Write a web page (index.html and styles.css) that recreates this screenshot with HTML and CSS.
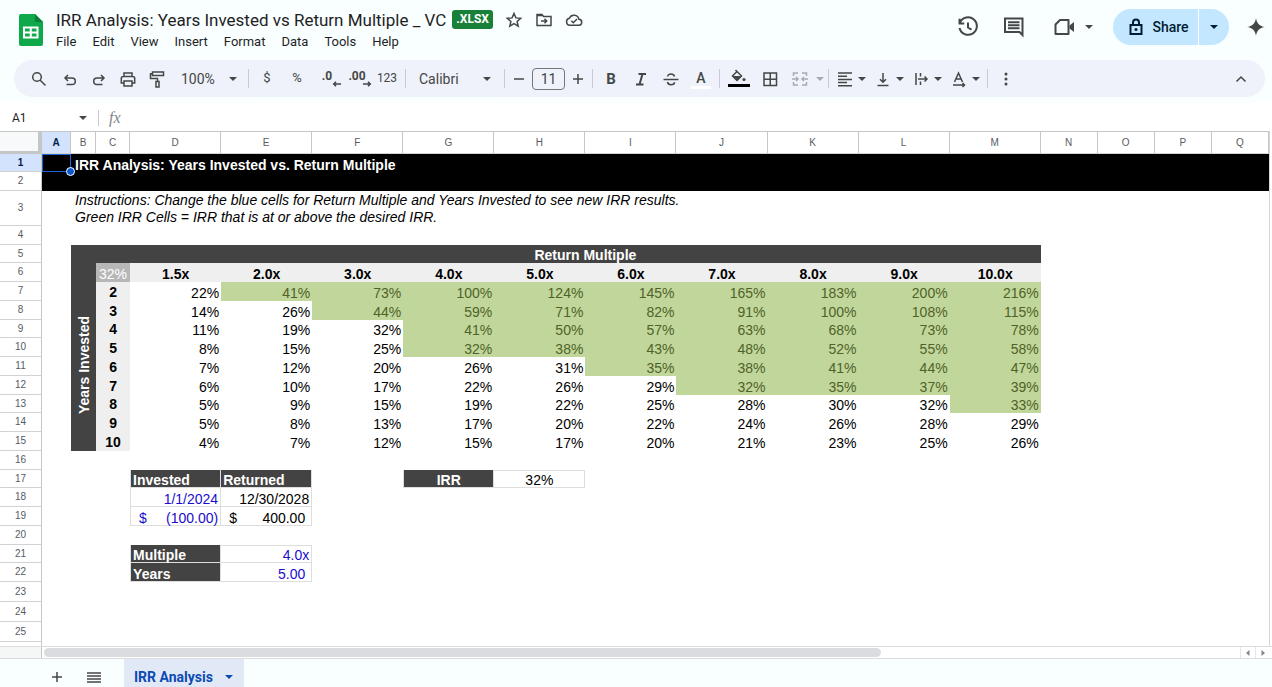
FILE: index.html
```html
<!DOCTYPE html>
<html lang="en">
  <head>
    <meta charset="utf-8">
    <meta name="viewport" content="width=device-width, initial-scale=1">
    <title>IRR Analysis: Years Invested vs Return Multiple _ VC</title>
    <link rel="stylesheet" href="styles.css">
  </head>
  <body>
    <svg class="defs" aria-hidden="true">
      <symbol id="caret" viewBox="0 0 10 10"><path d="M1 3h8L5 7z"/></symbol>
    </svg>

    <header class="header">
      <svg class="logo" viewBox="0 0 24 32" aria-hidden="true">
        <path fill="#0fa84b" d="M2 0h14l8 8v22a2 2 0 0 1-2 2H2a2 2 0 0 1-2-2V2a2 2 0 0 1 2-2z"/>
        <path fill="#0b7f37" d="M16 0l8 8h-8z"/>
        <path fill="#fff" fill-rule="evenodd" d="M4 12.500h15.500v12H4zM6 14.500v3h4.700v-3zM12.800 14.500v3h4.700v-3zM6 19.500v3h4.700v-3zM12.800 19.500v3h4.700v-3z"/>
      </svg>
      <div class="doc">
        <div class="title_row">
          <h1>IRR Analysis: Years Invested vs Return Multiple _ VC</h1>
          <span class="badge">.XLSX</span>
          <button class="small_icon" aria-label="Star">
            <svg class="line" viewBox="0 0 18 18"><path d="M9 2.500l1.900 4.400 4.800.4-3.600 3.200 1.100 4.700L9 12.700l-4.200 2.500 1.100-4.700-3.600-3.200 4.800-.4z"/></svg>
          </button>
          <button class="small_icon" aria-label="Move">
            <svg class="line" viewBox="0 0 18 18"><path d="M2 14.500v-11h5l1.500 2H16v9zM6 10h5.500M9.500 7.800l2.200 2.200-2.200 2.200M2 4.500h5"/></svg>
          </button>
          <button class="small_icon" aria-label="Saved to Drive">
            <svg class="line" viewBox="0 0 18 18"><path d="M4.800 14.300h8.700a3 3 0 0 0 .4-6 5 5 0 0 0-9.500-1.100 3.600 3.600 0 0 0 .4 7.100zM6.300 9.700l2 2 3.700-3.700"/></svg>
          </button>
        </div>
        <nav class="menu">
          <button>File</button>
          <button>Edit</button>
          <button>View</button>
          <button>Insert</button>
          <button>Format</button>
          <button>Data</button>
          <button>Tools</button>
          <button>Help</button>
        </nav>
      </div>
      <div class="actions">
        <button class="action" aria-label="Version history">
          <svg class="line bold" viewBox="0 0 22 22"><path d="M3 6.500A8.800 8.800 0 1 1 2.500 12M2.500 2.800v4.700h4.700M11 6.500v5l3.500 2.200"/></svg>
        </button>
        <button class="action" aria-label="Comments">
          <svg class="line bold" viewBox="0 0 22 22"><path d="M2 2.500h17.500v16.500l-3-3H2zM5 6.200h11.500M5 9.200h11.500M5 12.200h11.500"/></svg>
        </button>
        <button class="action meet" aria-label="Join a call">
          <svg class="line bold" viewBox="0 0 22 22"><path stroke-linejoin="round" d="M7 4h8.500v14H2.500V8.500z"/><path class="solid" d="M16.500 9.500L21 6v10l-4.500-3.500z"/></svg>
          <svg class="caret"><use href="#caret"/></svg>
        </button>
        <div class="share">
          <button class="share_main">
            <svg class="line bold" viewBox="0 0 16 18"><path d="M2.500 7h11v9h-11zM5 7V4.500a3 3 0 0 1 6 0V7"/><circle class="dot" cx="8" cy="11.500" r="1.500"/></svg>
            Share
          </button>
          <button class="share_more" aria-label="Share options"><svg class="caret"><use href="#caret"/></svg></button>
        </div>
        <button class="spark" aria-label="Ask Gemini">
          <svg viewBox="0 0 20 20"><path d="M10 0c.8 6 4 9.200 10 10-6 .8-9.200 4-10 10-.8-6-4-9.200-10-10 6-.8 9.200-4 10-10z"/></svg>
        </button>
      </div>
    </header>

    <div class="toolbar" role="toolbar">
      <button class="tool search" aria-label="Search the menus">
        <svg class="line" viewBox="0 0 18 18"><circle cx="7" cy="7" r="4.300"/><path d="M10.200 10.200l5.300 5.300"/></svg>
      </button>
      <button class="tool" aria-label="Undo">
        <svg class="line" viewBox="0 0 18 18"><path d="M7 5L4 8l3 3M4 8h7a3.300 3.300 0 0 1 0 6.600H5.500"/></svg>
      </button>
      <button class="tool" aria-label="Redo">
        <svg class="line" viewBox="0 0 18 18"><path d="M11 5l3 3-3 3M14 8H7a3.300 3.300 0 0 0 0 6.600h5.500"/></svg>
      </button>
      <button class="tool" aria-label="Print">
        <svg class="line" viewBox="0 0 18 18"><path d="M5 6V3h8v3M5 13H2.300V8.500A2 2 0 0 1 4.300 6.500h9.400a2 2 0 0 1 2 2V13H13M5 11h8v5H5z"/></svg>
      </button>
      <button class="tool" aria-label="Paint format">
        <svg class="line" viewBox="0 0 18 18"><path d="M4.500 2h11v3.500h-11zM4.500 3.700H2.500v4.800h7v3M8 11.500h3V17H8z"/></svg>
      </button>
      <label class="picker zoom">
        <select aria-label="Zoom"><option>100%</option></select>
        <svg class="caret"><use href="#caret"/></svg>
      </label>
      <span class="sep"></span>
      <button class="tool wide sign" aria-label="Format as currency">$</button>
      <button class="tool wide sign" aria-label="Format as percent">%</button>
      <button class="tool wide decimal" aria-label="Decrease decimal places">.0<svg class="line" viewBox="0 0 10 6"><path d="M9 3H2M4 .7L1.700 3 4 5.300"/></svg></button>
      <button class="tool wide decimal" aria-label="Increase decimal places">.00<svg class="line" viewBox="0 0 10 6"><path d="M1 3h7M6 .7L8.300 3 6 5.300"/></svg></button>
      <button class="tool wide number" aria-label="More formats">123</button>
      <span class="sep"></span>
      <label class="picker font">
        <select aria-label="Font"><option>Calibri</option></select>
        <svg class="caret"><use href="#caret"/></svg>
      </label>
      <span class="sep"></span>
      <div class="size">
        <button aria-label="Decrease font size"><svg class="line" viewBox="0 0 12 12"><path d="M1 6h10"/></svg></button>
        <input type="text" value="11" aria-label="Font size">
        <button aria-label="Increase font size"><svg class="line" viewBox="0 0 12 12"><path d="M1 6h10M6 1v10"/></svg></button>
      </div>
      <span class="sep"></span>
      <button class="tool wide bold_text" aria-label="Bold">B</button>
      <button class="tool wide" aria-label="Italic">
        <svg class="line bold" viewBox="0 0 18 18"><path d="M6.500 4H14M4 14.500h7.500M10.500 4l-3 10.500"/></svg>
      </button>
      <button class="tool wide" aria-label="Strikethrough">
        <svg class="line" viewBox="0 0 18 18"><path d="M1.500 9.500h15M12.500 6.500C12 4.500 10.500 4 9 4S5.600 4.800 5.600 6.600M5.500 12c.4 2 1.900 2.700 3.500 2.700s3.500-.8 3.500-2.500"/></svg>
      </button>
      <button class="tool wide text_color" aria-label="Text color">A</button>
      <span class="sep"></span>
      <button class="tool fill" aria-label="Fill color">
        <svg class="fill_icon" viewBox="0 0 22 20"><path class="stroke" d="M7.500 1l6 6-4.500 4.500L4.500 7 9 2.500"/><path d="M4.500 7h9L9 11.700z"/><circle cx="16" cy="10.500" r="1.600"/><path fill="#000" d="M0 15h22v3H0z"/></svg>
      </button>
      <button class="tool wide" aria-label="Borders">
        <svg class="line" viewBox="0 0 18 18"><path d="M3 3h12.500v12.500H3zM9.250 3v12.500M3 9.250h12.500"/></svg>
      </button>
      <button class="tool wide faded" aria-label="Merge cells">
        <svg class="line" viewBox="0 0 18 18"><path d="M7 3H2.500v3M2.500 12v3H7M11 3h4.500v3M15.500 12v3H11M1 9h6M5 7l2 2-2 2M17 9h-6M13 7l-2 2 2 2"/></svg>
      </button>
      <button class="faded" aria-label="Merge options"><svg class="caret"><use href="#caret"/></svg></button>
      <span class="sep"></span>
      <button class="tool_menu" aria-label="Horizontal align">
        <svg class="line" viewBox="0 0 18 18"><path d="M2 3h14M2 6.200h9M2 9.400h14M2 12.600h9M2 15.800h14"/></svg>
        <svg class="caret"><use href="#caret"/></svg>
      </button>
      <button class="tool_menu" aria-label="Vertical align">
        <svg class="line" viewBox="0 0 18 18"><path d="M3.500 15.500h11M9 3v9M6 9.200l3 3 3-3"/></svg>
        <svg class="caret"><use href="#caret"/></svg>
      </button>
      <button class="tool_menu" aria-label="Text wrapping">
        <svg class="line" viewBox="0 0 18 18"><path d="M4 3v12M8.500 3v3.500M8.500 11.500V15M6 9h9M12.500 6.500L15 9l-2.500 2.500"/></svg>
        <svg class="caret"><use href="#caret"/></svg>
      </button>
      <button class="tool_menu" aria-label="Text rotation">
        <svg class="line" viewBox="0 0 18 18"><path d="M4.500 12L8.500 3l4 9M6 9h5M3 15h11M12.500 13l2 2-2 2"/></svg>
        <svg class="caret"><use href="#caret"/></svg>
      </button>
      <span class="sep"></span>
      <button class="tool wide" aria-label="More">
        <svg viewBox="0 0 18 18"><circle cx="9" cy="4" r="1.500"/><circle cx="9" cy="9" r="1.500"/><circle cx="9" cy="14" r="1.500"/></svg>
      </button>
      <button class="tool wide collapse" aria-label="Hide the menus">
        <svg class="line" viewBox="0 0 18 18"><path d="M4.500 11.500L9 7l4.500 4.500"/></svg>
      </button>
    </div>

    <div class="formula">
      <input class="name_box" type="text" value="A1" aria-label="Name box">
      <svg class="caret"><use href="#caret"/></svg>
      <span class="formula_sep"></span>
      <label class="fx" for="formula_input"><i>fx</i></label>
      <input class="formula_input" id="formula_input" type="text">
    </div>

    <main class="grid">
      <table class="sheet">
        <colgroup>
          <col class="col_head"><col class="col_a"><col class="col_b"><col class="col_c">
          <col class="col_data" span="10"><col class="col_rest" span="4">
        </colgroup>
        <thead>
          <tr>
            <td class="corner"></td>
            <th class="active">A</th><th>B</th><th>C</th><th>D</th><th>E</th><th>F</th><th>G</th><th>H</th><th>I</th>
            <th>J</th><th>K</th><th>L</th><th>M</th><th>N</th><th>O</th><th>P</th><th>Q</th>
          </tr>
        </thead>
        <tbody>
          <tr class="black"><th class="active">1</th><td class="selected"><span class="handle"></span></td><td colspan="16" class="sheet_title">IRR Analysis: Years Invested vs. Return Multiple</td></tr>
          <tr class="black"><th>2</th><td colspan="17"></td></tr>
          <tr class="tall"><th>3</th><td></td><td colspan="16" class="note">Instructions: Change the blue cells for Return Multiple and Years Invested to see new IRR results.<br>Green IRR Cells = IRR that is at or above the desired IRR.</td></tr>
          <tr><th>4</th><td colspan="17"></td></tr>
          <tr><th>5</th><td></td><td class="dark"></td><td class="dark"></td><td colspan="10" class="dark center">Return Multiple</td><td colspan="4"></td></tr>
          <tr class="multiples"><th>6</th><td></td><td class="dark"></td><td class="target">32%</td><td>1.5x</td><td>2.0x</td><td>3.0x</td><td>4.0x</td><td>5.0x</td><td>6.0x</td><td>7.0x</td><td>8.0x</td><td>9.0x</td><td>10.0x</td></tr>
          <tr><th>7</th><td></td><td rowspan="9" class="dark side"><span>Years Invested</span></td><td class="year">2</td><td>22%</td><td class="hit">41%</td><td class="hit">73%</td><td class="hit">100%</td><td class="hit">124%</td><td class="hit">145%</td><td class="hit">165%</td><td class="hit">183%</td><td class="hit">200%</td><td class="hit">216%</td></tr>
          <tr><th>8</th><td></td><td class="year">3</td><td>14%</td><td>26%</td><td class="hit">44%</td><td class="hit">59%</td><td class="hit">71%</td><td class="hit">82%</td><td class="hit">91%</td><td class="hit">100%</td><td class="hit">108%</td><td class="hit">115%</td></tr>
          <tr><th>9</th><td></td><td class="year">4</td><td>11%</td><td>19%</td><td>32%</td><td class="hit">41%</td><td class="hit">50%</td><td class="hit">57%</td><td class="hit">63%</td><td class="hit">68%</td><td class="hit">73%</td><td class="hit">78%</td></tr>
          <tr><th>10</th><td></td><td class="year">5</td><td>8%</td><td>15%</td><td>25%</td><td class="hit">32%</td><td class="hit">38%</td><td class="hit">43%</td><td class="hit">48%</td><td class="hit">52%</td><td class="hit">55%</td><td class="hit">58%</td></tr>
          <tr><th>11</th><td></td><td class="year">6</td><td>7%</td><td>12%</td><td>20%</td><td>26%</td><td>31%</td><td class="hit">35%</td><td class="hit">38%</td><td class="hit">41%</td><td class="hit">44%</td><td class="hit">47%</td></tr>
          <tr><th>12</th><td></td><td class="year">7</td><td>6%</td><td>10%</td><td>17%</td><td>22%</td><td>26%</td><td>29%</td><td class="hit">32%</td><td class="hit">35%</td><td class="hit">37%</td><td class="hit">39%</td></tr>
          <tr><th>13</th><td></td><td class="year">8</td><td>5%</td><td>9%</td><td>15%</td><td>19%</td><td>22%</td><td>25%</td><td>28%</td><td>30%</td><td>32%</td><td class="hit">33%</td></tr>
          <tr><th>14</th><td></td><td class="year">9</td><td>5%</td><td>8%</td><td>13%</td><td>17%</td><td>20%</td><td>22%</td><td>24%</td><td>26%</td><td>28%</td><td>29%</td></tr>
          <tr><th>15</th><td></td><td class="year">10</td><td>4%</td><td>7%</td><td>12%</td><td>15%</td><td>17%</td><td>20%</td><td>21%</td><td>23%</td><td>25%</td><td>26%</td></tr>
          <tr><th>16</th><td colspan="17"></td></tr>
          <tr><th>17</th><td colspan="3"></td><td class="dark left boxed edge">Invested</td><td class="dark left boxed">Returned</td><td></td><td class="dark center boxed edge">IRR</td><td class="center boxed top">32%</td></tr>
          <tr><th>18</th><td colspan="3"></td><td class="blue boxed edge">1/1/2024</td><td class="boxed">12/30/2028</td></tr>
          <tr><th>19</th><td colspan="3"></td><td class="blue boxed edge"><div class="money"><span>$</span><span>(100.00)</span></div></td><td class="boxed"><div class="money padded"><span>$</span><span>400.00</span></div></td></tr>
          <tr><th>20</th><td colspan="17"></td></tr>
          <tr><th>21</th><td colspan="3"></td><td class="dark left boxed edge">Multiple</td><td class="blue boxed top">4.0x</td></tr>
          <tr><th>22</th><td colspan="3"></td><td class="dark left boxed edge">Years</td><td class="blue boxed"><div class="money padded"><span></span><span>5.00</span></div></td></tr>
          <tr><th>23</th><td colspan="17"></td></tr>
          <tr><th>24</th><td colspan="17"></td></tr>
          <tr><th>25</th><td colspan="17"></td></tr>
          <tr><th></th><td colspan="17"></td></tr>
        </tbody>
      </table>
    </main>

    <div class="scroll">
      <div class="scroll_corner"></div>
      <div class="scroll_track"><div class="scroll_thumb"></div></div>
      <button aria-label="Scroll left"><svg viewBox="0 0 6 6"><path d="M4.500 0v6L1 3z"/></svg></button>
      <button aria-label="Scroll right"><svg viewBox="0 0 6 6"><path d="M1.500 0v6L5 3z"/></svg></button>
    </div>

    <footer class="tabs">
      <button class="tab_tool" aria-label="Add sheet"><svg class="line" viewBox="0 0 12 12"><path d="M1 6h10M6 1v10"/></svg></button>
      <button class="tab_tool" aria-label="All sheets"><svg class="line" viewBox="0 0 14 12"><path d="M0 2h14M0 5h14M0 8h14M0 11h14"/></svg></button>
      <button class="tab">IRR Analysis <svg class="caret"><use href="#caret"/></svg></button>
    </footer>
  </body>
</html>
```
FILE: styles.css
```css
* {
  box-sizing: border-box;
}

body {
  margin: 0;
  height: 100vh;
  display: flex;
  flex-direction: column;
  overflow: hidden;
  background: #f9feff;
  color: #1f1f1f;
  font-family: Roboto, "Liberation Sans", sans-serif;
}

button,
input,
select {
  margin: 0;
  padding: 0;
  border: none;
  background: none;
  color: inherit;
  font: inherit;
}

button {
  display: flex;
  align-items: center;
  justify-content: center;
  cursor: pointer;
}

svg {
  display: block;
  flex: none;
  width: 18px;
  height: 18px;
  fill: currentColor;
}

.defs {
  display: none;
}

.line {
  fill: none;
  stroke: currentColor;
  stroke-width: 1.5;
}

.line.bold {
  stroke-width: 2;
}

.line .solid,
.line .dot {
  fill: currentColor;
  stroke: none;
}

.caret {
  width: 10px;
  height: 10px;
}

/* header */
.header {
  display: flex;
  height: 60px;
  padding: 7px 7px 0 19px;
}

.logo {
  width: 24px;
  height: 32px;
  margin-top: 7px;
}

.doc {
  margin-left: 13px;
}

.title_row {
  display: flex;
  align-items: center;
  height: 25px;
}

h1 {
  margin: 0 6px 0 0;
  font-size: 17px;
  font-weight: 400;
  white-space: nowrap;
}

.badge {
  margin-right: 6px;
  padding: 0 4px;
  border-radius: 3px;
  background: #188038;
  color: #fff;
  font-size: 12px;
  font-weight: 700;
  line-height: 19px;
}

.small_icon {
  width: 30px;
  color: #444746;
}

.menu {
  display: flex;
  gap: 16px;
  font-size: 13px;
  line-height: 20px;
}

.actions {
  display: flex;
  align-items: center;
  height: 40px;
  margin-left: auto;
  color: #444746;
}

.action {
  width: 46px;
}

.action svg:first-child {
  width: 22px;
  height: 22px;
}

.meet {
  width: 76px;
  gap: 9px;
  padding-right: 4px;
}

.share {
  display: flex;
  height: 36px;
  border-radius: 18px;
  background: #c2e7ff;
  color: #001d35;
  overflow: hidden;
}

.share_main {
  width: 85px;
  gap: 8px;
  padding-left: 6px;
  font-size: 14px;
  font-weight: 500;
}

.share_main svg {
  width: 16px;
}

.share_more {
  width: 31px;
  border-left: 1px solid #fff;
}

.spark {
  margin-left: 18px;
}

/* toolbar */
.toolbar {
  display: flex;
  flex: none;
  align-items: center;
  height: 37px;
  margin: 0 7px 0 14px;
  padding: 0 9px;
  border-radius: 19px;
  background: #eff2fa;
  color: #444746;
  font-size: 14px;
}

.tool {
  flex: none;
  width: 29px;
  height: 30px;
}

.tool.wide {
  width: 30px;
}

.tool.search,
.tool.fill {
  width: 32px;
}

.sign {
  padding-bottom: 2px;
  font-size: 13px;
}

.number {
  padding-bottom: 2px;
  font-size: 12px;
}

.decimal {
  flex-direction: column;
  align-items: center;
  font-size: 12px;
  font-weight: 700;
  line-height: 10px;
}

.decimal svg {
  align-self: flex-end;
  width: 10px;
  height: 6px;
}

.picker {
  display: flex;
  align-items: center;
  gap: 3px;
}

.picker select {
  appearance: none;
}

.zoom {
  width: 74px;
  padding-left: 10px;
}

.zoom select {
  width: 44px;
}

.font {
  width: 92px;
  padding-left: 10px;
}

.font select {
  width: 60px;
}

.sep {
  width: 1px;
  height: 19px;
  margin: 0 3px;
  background: #c7cad1;
}

.size {
  display: flex;
  gap: 2px;
}

.size button {
  width: 22px;
}

.size button svg {
  width: 12px;
  height: 12px;
}

.size input {
  width: 33px;
  height: 22px;
  border: 1px solid #747775;
  border-radius: 4px;
  text-align: center;
}

.bold_text {
  font-size: 15px;
  font-weight: 700;
}

.text_color {
  position: relative;
  padding-bottom: 2px;
  font-weight: 500;
}

.text_color::after {
  content: "";
  position: absolute;
  left: 5px;
  right: 5px;
  bottom: 5px;
  height: 3px;
  background: #fff;
}

.fill_icon {
  width: 22px;
  height: 20px;
}

.fill_icon .stroke {
  fill: none;
  stroke: currentColor;
  stroke-width: 1.5;
}

.faded {
  color: #a9abb0;
}

.tool_menu {
  width: 38px;
  gap: 3px;
}

.collapse {
  margin-left: auto;
}

/* formula bar */
.formula {
  display: flex;
  flex: none;
  align-items: center;
  height: 34px;
  padding: 8px 12px 0;
  background: linear-gradient(#f9feff, #fff 8px);
  color: #444746;
  font-size: 12px;
}

.name_box {
  width: 66px;
  color: #1f1f1f;
}

.formula_sep {
  width: 1px;
  height: 16px;
  margin: 0 10px;
  background: #c7cad1;
}

.fx {
  color: #80868b;
  font: 16px "Liberation Serif", serif;
}

.formula_input {
  flex: 1;
}

/* sheet */
.grid {
  flex: 1;
  min-height: 0;
  padding-right: 2px;
  overflow: hidden;
  background: #fff;
}

.sheet {
  width: 100%;
  table-layout: fixed;
  border-right: 1px solid #d5d7da;
  border-spacing: 0;
  color: #000;
  font: 14px/16px "Liberation Sans", Arial, sans-serif;
}

.col_head { width: 42px; }
.col_a { width: 29px; }
.col_b { width: 25px; }
.col_c { width: 34px; }
.col_data { width: 91px; }
.col_rest { width: 57px; }

.sheet td {
  padding: 0 2px;
  text-align: right;
  vertical-align: bottom;
  white-space: nowrap;
}

.sheet th {
  padding: 0;
  border-right: 1px solid #c4c7c5;
  border-bottom: 1px solid #d0d2d4;
  color: #575b5f;
  font-size: 10px;
  font-weight: 400;
  line-height: 14px;
}

.sheet th.active {
  background: #d3e3fd;
  color: #041e49;
  font-weight: 700;
}

thead tr {
  height: 23px;
}

thead th,
.sheet .corner {
  border-top: 1px solid #c4c7c5;
}

.sheet .corner {
  border-right: 4px solid #c4c7c5;
  border-bottom: 3px solid #c4c7c5;
  background: #f8f9fa;
}

tbody tr {
  height: 19px;
}

tbody tr:nth-child(4n+1) {
  height: 18px;
}

tbody tr:nth-child(n+23) {
  height: 20px;
}

tbody tr.tall {
  height: 35px;
}

.black td {
  background: #000;
  color: #fff;
}

.sheet .sheet_title {
  padding-left: 4px;
  font-weight: 700;
  line-height: 14px;
  text-align: left;
}

.sheet .selected {
  position: relative;
  border: 1px solid #1a66d9;
}

.handle {
  position: absolute;
  right: -5px;
  bottom: -5px;
  z-index: 1;
  width: 9px;
  height: 9px;
  border: 1px solid #fff;
  border-radius: 50%;
  background: #0b57d0;
}

.sheet .note {
  padding-left: 4px;
  font-style: italic;
  line-height: 17px;
  text-align: left;
}

.sheet .dark {
  background: #434343;
  color: #fff;
  font-weight: 700;
}

.sheet .center {
  text-align: center;
}

.sheet .left {
  text-align: left;
}

.multiples td:nth-child(n+4) {
  background: #efefef;
  font-weight: 700;
  text-align: center;
}

.multiples td.target:nth-child(n) {
  padding: 0;
  background: #b7b7b7;
  color: #fff;
  font-weight: 400;
}

.sheet .year {
  background: #efefef;
  font-weight: 700;
  text-align: center;
  vertical-align: middle;
}

.sheet .side {
  padding: 0;
  text-align: center;
  vertical-align: middle;
}

.side span {
  writing-mode: vertical-rl;
  transform: rotate(180deg);
}

.sheet .hit {
  background: #c1d69b;
  color: #4f6228;
}

.sheet .blue {
  color: #1a0dcc;
}

.sheet .boxed {
  border-right: 1px solid #dedede;
  border-bottom: 1px solid #dedede;
  line-height: 13px;
}

.sheet .edge {
  border-left: 1px solid #dedede;
}

.sheet .top {
  border-top: 1px solid #dedede;
}

.money {
  display: flex;
  justify-content: space-between;
  padding-left: 6px;
}

.money.padded {
  padding-right: 4px;
}

/* scrollbar */
.scroll {
  display: flex;
  flex: none;
  align-items: center;
  height: 13px;
  padding-right: 2px;
  border-top: 1px solid #dadce0;
  border-bottom: 1px solid #dadce0;
  background: #fff;
}

.scroll_corner {
  width: 42px;
  height: 11px;
  margin-right: 2px;
  border-right: 1px solid #c4c7c5;
  background: #f5f6f6;
}

.scroll_track {
  flex: 1;
}

.scroll_thumb {
  width: 70%;
  height: 9px;
  border-radius: 5px;
  background: #dadce0;
}

.scroll button {
  width: 15px;
  height: 11px;
  border-left: 1px solid #e4e6e8;
  color: #80868b;
}

.scroll button svg {
  width: 6px;
  height: 6px;
}

/* sheet tabs */
.tabs {
  display: flex;
  flex: none;
  height: 28px;
  padding-left: 38px;
  color: #444746;
}

.tab_tool {
  width: 37px;
  padding-top: 7px;
}

.tab_tool svg {
  width: 14px;
  height: 12px;
}

.tab {
  gap: 11px;
  margin-left: 12px;
  padding: 7px 10px 0;
  background: #e1e9f7;
  color: #0b4bb3;
  font-size: 14px;
  font-weight: 700;
}
```
